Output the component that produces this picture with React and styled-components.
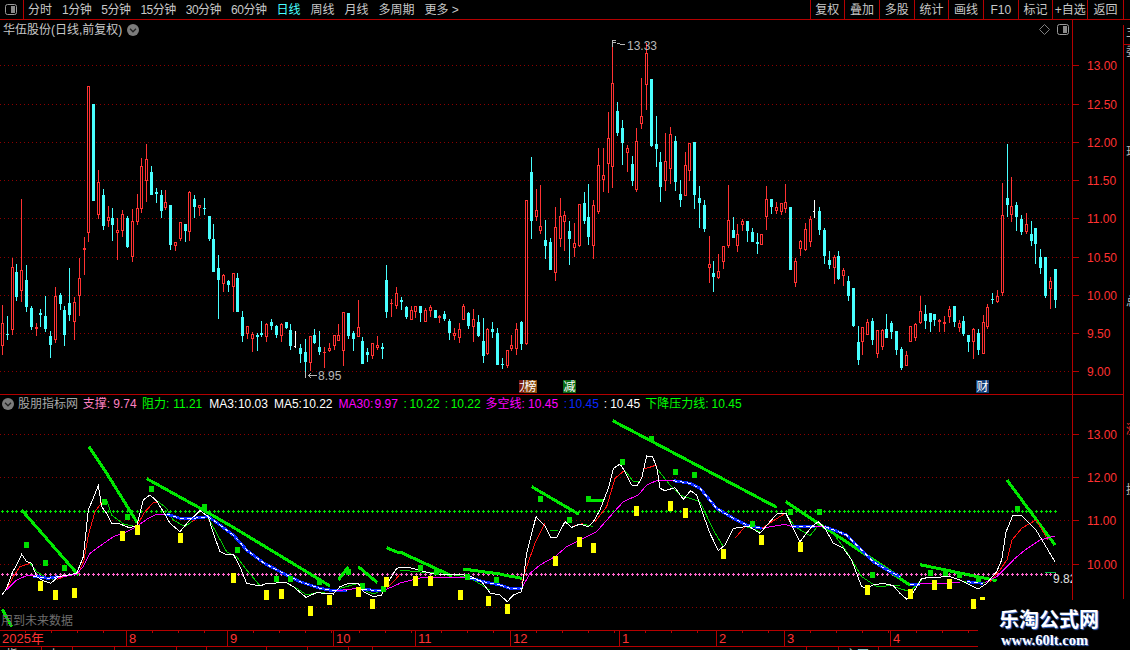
import React from 'react';
import styled, { createGlobalStyle } from 'styled-components';

const RED = '#ff3232';
const LINE = '#b40000';
const CYAN = '#48ffff';
const FONT = '"Liberation Sans", "Noto Sans CJK SC", sans-serif';

const GlobalStyle = createGlobalStyle`
  html, body { margin: 0; padding: 0; background: #000; }
  #root { width: 1130px; height: 650px; overflow: hidden; }
`;

/* ---------- candle data, read off the chart: [x, colour, high, top, bottom, low] ---------- */
const C1 = [[7,'r',675,730,800,825],[22,'c',708,762,765,780],[37,'r',534,562,750,765],[49,'c',552,576,651,663],[64,'r',357,571,635,666],[79,'c',556,600,681,696],[94,'c',679,684,741,750],[109,'r',729,741,747,768],[121,'c',687,699,705,741],[136,'c',648,708,748,756],[151,'c',753,768,795,834],[166,'r',621,648,780,789],[181,'c',640,645,672,690],[193,'c',678,690,765,798],[208,'c',564,669,705,723],[223,'r',651,667,728,780],[238,'r',534,595,650,708],[253,'r',471,504,510,585],[265,'r',18,18,461,486],[280,'c',72,72,363,363],[295,'r',270,306,407,417],[310,'c',327,345,438,450],[325,'r',378,411,423,441],[337,'c',384,414,435,483],[352,'r',416,451,461,540],[367,'r',390,403,453,471],[382,'c',408,414,501,504],[397,'r',387,424,533,546],[412,'r',342,385,426,435],[424,'r',234,259,387,399],[439,'r',192,238,303,366],[454,'c',258,276,345,345],[469,'c',324,336,342,369],[484,'c',330,345,393,414],[496,'r',330,366,384,390],[511,'c',375,375,495,510],[526,'r',487,487,498,513],[541,'r',427,427,477,483],[556,'c',432,432,453,486],[568,'r',333,336,456,483],[583,'c',345,357,381,414],[598,'r',376,376,384,408],[613,'c',354,384,387,405],[628,'c',408,408,477,483],[640,'c',432,477,576,576],[655,'c',525,564,600,717],[670,'r',582,585,612,636],[685,'c',600,603,615,636],[700,'r',579,579,621,696],[712,'c',579,594,696,696],[727,'c',693,711,768,786],[742,'r',738,738,762,777],[757,'r',756,762,777,816],[772,'c',759,766,771,813]];
const C2 = [[4,'c',723,759,765,771],[19,'r',729,732,771,786],[34,'c',717,726,738,750],[49,'c',735,738,765,774],[64,'r',729,732,768,786],[79,'c',726,726,744,747],[91,'c',732,750,798,810],[106,'w',753,798,801,804],[121,'c',792,804,822,849],[136,'c',777,816,846,885],[151,'r',768,768,849,873],[163,'c',747,765,789,792],[178,'c',753,801,816,825],[193,'r',801,816,819,864],[208,'r',789,804,813,816],[223,'r',765,766,798,810],[235,'r',732,765,783,783],[250,'r',696,696,813,858],[265,'c',699,699,768,777],[280,'c',753,759,777,813],[295,'r',660,741,771,771],[307,'c',771,783,852,852],[322,'c',804,816,825,846],[337,'r',789,789,828,837],[352,'r',768,795,804,810],[367,'c',789,801,807,837],[379,'c',555,600,696,714],[394,'r',657,669,672,711],[409,'r',621,639,678,687],[424,'c',651,660,666,690],[439,'c',678,681,711,717],[454,'r',678,690,720,720],[466,'r',678,678,696,714],[481,'c',678,678,699,726],[496,'r',684,690,726,726],[511,'r',675,681,693,711],[526,'c',690,690,714,714],[538,'r',705,708,714,729],[553,'c',693,702,717,723],[568,'c',717,723,759,780],[583,'r',744,759,768,780],[598,'r',729,747,774,789],[610,'r',672,678,720,720],[625,'c',696,699,738,747],[640,'r',687,717,741,786],[655,'c',705,726,768,771],[670,'c',714,783,828,849],[682,'r',744,747,822,825],[697,'c',726,747,756,774],[712,'c',744,759,855,855],[727,'c',834,852,855,867],[742,'r',810,810,858,864],[754,'r',765,795,807,813],[769,'r',729,747,807,825]];
const C3 = [[4,'c',873,876,942,960],[19,'r',510,510,942,945],[34,'c',381,426,573,627],[49,'r',477,540,561,573],[61,'r',465,588,603,612],[76,'c',570,630,648,687],[91,'c',624,636,720,720],[106,'r',531,591,729,753],[121,'r',504,558,627,651],[133,'r',543,555,576,663],[148,'c',573,603,627,705],[163,'r',579,639,654,681],[178,'r',522,522,648,651],[193,'c',486,519,573,582],[205,'c',462,561,621,645],[220,'r',510,525,648,687],[235,'r',354,405,546,552],[250,'r',354,435,450,486],[265,'r',246,324,402,489],[277,'r',39,159,411,474],[292,'c',216,243,309,318],[307,'c',270,294,339,405],[322,'r',345,354,369,426],[337,'c',378,402,453,468],[349,'r',294,333,480,486],[364,'r',144,258,282,297],[379,'r',39,69,167,240],[394,'c',147,147,348,351],[409,'c',258,342,357,411],[421,'c',366,396,471,516],[436,'r',309,393,453,483],[451,'r',291,312,417,462],[466,'c',318,333,456,483],[481,'c',450,492,510,531],[496,'r',366,405,498,498],[508,'r',339,339,423,453],[523,'c',336,336,495,537],[538,'c',468,504,519,594],[553,'c',510,525,597,606],[568,'r',618,702,714,759],[580,'c',693,729,741,786],[595,'r',672,723,745,747],[610,'r',648,648,696,717],[625,'r',465,570,648,654],[640,'c',561,600,624,624],[652,'r',582,612,648,666],[667,'r',567,573,585,603],[682,'c',573,573,603,636],[697,'c',594,606,636,636],[712,'c',609,636,642,672],[724,'r',612,612,645,645],[739,'r',468,507,561,600],[754,'c',507,507,531,552],[769,'r',516,531,543,552]];
const C4 = [[4,'r',219,219,246,255],[16,'r',162,216,237,249],[31,'c',231,231,420,420],[46,'r',384,393,459,471],[61,'r',330,333,357,378],[76,'r',279,297,360,363],[91,'r',258,267,336,351],[103,'w',210,243,246,264],[118,'c',231,243,300,315],[133,'c',294,300,378,402],[148,'c',363,390,405,417],[163,'r',375,381,414,462],[175,'c',363,378,447,450],[190,'r',414,420,438,468],[205,'c',438,453,498,513],[220,'c',474,474,588,591],[235,'c',588,636,690,705],[247,'r',591,591,636,675],[262,'r',567,576,615,615],[277,'c',564,573,630,645],[292,'r',600,600,672,684],[307,'r',597,600,651,660],[319,'c',552,597,624,624],[334,'c',573,579,606,627],[349,'c',603,603,660,675],[364,'c',651,657,714,720],[379,'r',663,675,708,708],[391,'r',588,588,636,636],[406,'r',579,582,624,633],[421,'r',498,543,579,582],[436,'c',525,552,573,597],[451,'c',549,549,576,606],[463,'c',552,552,570,588],[478,'r',567,570,576,606],[493,'r',558,576,582,606],[508,'r',528,537,561,579],[523,'c',528,528,576,591],[538,'r',570,579,594,606],[550,'c',558,573,612,618],[565,'c',615,615,636,666],[580,'r',594,597,636,687],[595,'c',597,609,660,675],[610,'r',555,576,672,672],[622,'r',522,531,591,597],[637,'c',489,507,510,522],[652,'r',480,498,516,519],[667,'r',159,255,489,498],[682,'c',42,204,225,261],[694,'r',141,228,255,276],[709,'c',216,225,261,303],[724,'c',255,267,306,315],[739,'r',249,282,306,312],[754,'c',273,312,333,348],[766,'c',294,294,342,402],[781,'c',357,381,414,432],[796,'c',381,381,498,504],[811,'r',441,453,477,537],[826,'c',417,417,510,534]];

const toCandles = (rows, ox, oy) =>
  rows.map(([x, k, hi, top, bot, lo]) => ({
    x: ox + Math.floor(x / 3),
    k,
    hi: oy + Math.floor(hi / 3),
    top: oy + Math.floor(top / 3),
    bot: oy + Math.floor(bot / 3),
    lo: oy + Math.floor(lo / 3),
  }));

const CANDLES = [
  ...toCandles(C1, 0, 80),
  ...toCandles(C2, 260, 80),
  ...toCandles(C3, 520, 30),
  ...toCandles(C4, 780, 130),
];

/* ---------- indicator data: zoomed coordinates per region ---------- */
const A = (pts) => pts.map(([x, y]) => [x / 3, 420 + y / 3]);
const B = (pts) => pts.map(([x, y]) => [500 + x / 3, 420 + y / 3]);
const D = (pts) => pts.map(([x, y]) => [800 + x / 3, 560 + y / 3]);

const WHITE = [
  ...A([[6,525],[20,505],[38,455],[50,435],[65,403],[80,425],[95,430],[110,470],[125,480],[152,490],[175,470],[205,465],[230,460],[250,410],[265,270],[295,197],[305,260],[320,280],[335,310],[360,312],[385,322],[410,320],[430,240],[450,225],[470,243],[490,275],[510,310],[540,335],[565,305],[600,272],[625,290],[640,340],[660,395],[680,405],[700,403],[720,440],[740,490],[780,498],[800,490],[860,488],[880,500],[918,532],[950,518],[1000,522],[1020,500],[1045,490],[1075,490],[1090,515],[1120,530],[1145,525],[1165,485],[1190,445],[1200,442]]),
  [408,567],[418,570],[430,573],[445,575],[458,574],[470,576],[482,582],[490,593],
  ...B([[0,525],[22,545],[40,525],[65,515],[80,400],[108,290],[135,318],[152,352],[170,352],[195,305],[215,322],[240,312],[265,320],[280,305],[300,270],[325,205],[340,145],[360,132],[375,155],[395,195],[410,198],[425,175],[440,108],[458,110],[472,150],[480,205],[495,212],[525,203],[550,238],[572,212],[590,225],[610,285],[630,340],[655,392],[675,375],[700,325],[725,322],[745,318],[780,340],[810,305],[830,282],[858,280],[875,315],[900,365],[935,320],[955,305],[975,325],[1000,370],[1030,385],[1055,420],[1085,500],[1100,505],[1120,495],[1150,490],[1180,497],[1200,520]]),
  ...D([[320,117],[335,105],[365,55],[400,52],[450,50],[480,60],[510,75],[535,87],[560,70],[590,35],[605,0]]),
  [1006,532],[1013,515],[1022,516],[1036,530],[1048,550],[1055,562],
];

const RED_SEGS = [
  A([[20,507],[40,470],[60,440],[90,430]]),
  A([[170,478],[190,472]]),
  A([[235,462],[252,420],[265,345],[285,275],[305,248],[320,240]]),
  A([[410,318],[435,275],[460,248],[475,245]]),
  A([[575,305],[600,290]]),
  A([[1160,505],[1185,480],[1200,462]]),
  B([[65,490],[80,440],[105,370],[135,308]]),
  B([[215,320],[250,310]]),
  B([[285,305],[320,260],[345,175],[375,150]]),
  B([[430,148],[470,135]]),
  B([[705,355],[735,320]]),
  B([[785,325],[855,280]]),
  D([[570,65],[600,30],[620,0]]),
  [[1007,560],[1012,540],[1022,528],[1036,520],[1048,540]],
];

const GREEN_SEGS = [
  A([[90,430],[110,455],[135,470],[160,478]]),
  A([[320,240],[335,285],[370,312],[410,320]]),
  A([[475,245],[500,265],[520,300],[555,320],[575,305]]),
  A([[625,295],[650,340],[680,395],[710,410],[740,450],[780,497]]),
  A([[860,490],[890,505],[920,525],[950,518],[1000,520]]),
  A([[1020,505],[1075,490],[1090,510],[1120,522],[1150,510]]),
  [[400,570],[420,572],[445,573],[470,578],[490,590]],
  B([[150,330],[175,332]]),
  B([[250,312],[280,320]]),
  B([[375,152],[400,185],[420,185]]),
  B([[470,145],[510,195],[540,225],[600,245],[640,330],[670,380]]),
  B([[740,320],[780,335]]),
  B([[858,282],[885,320],[930,347],[960,310]]),
  B([[1000,340],[1040,395],[1085,470],[1130,500],[1200,495]]),
  D([[280,80],[330,95],[365,60]]),
  D([[470,58],[510,70],[555,68]]),
];

const BLUE_SEGS = [
  A([[100,468],[145,475],[175,470]]),
  A([[500,282],[540,295],[580,295],[625,290],[660,315],[700,345],[740,390],[790,428],[850,460],[900,485],[960,505],[1000,512],[1040,512]]),
  A([[1090,508],[1150,513]]),
  [[470,578],[485,582],[500,585]],
  B([[0,495],[30,505],[65,505]]),
  B([[520,182],[570,190],[600,205],[650,265],[700,295],[740,315],[785,325]]),
  B([[875,320],[945,320]]),
  B([[975,320],[1040,345],[1075,380],[1120,425],[1170,455],[1200,470]]),
  D([[330,72],[360,72]]),
  D([[500,65],[550,70]]),
];

const PURPLE_SEGS = [
  A([[20,510],[50,480],[80,467],[105,467]]),
  A([[175,472],[190,470],[230,462],[250,440],[270,400],[300,378],[340,350],[380,335],[410,320],[440,298],[470,283],[500,282]]),
  A([[1010,512],[1075,505],[1090,508]]),
  A([[1150,512],[1200,490]]),
  [[400,583],[420,578],[440,577],[470,578]],
  B([[65,505],[90,460],[120,435],[165,410],[200,380],[240,360],[290,335],[325,295],[370,245],[415,225],[440,195],[470,182],[520,182]]),
  B([[785,325],[855,313],[875,320]]),
  B([[945,320],[975,320]]),
  D([[360,72],[480,68]]),
  D([[555,68],[590,50],[640,0]]),
  [[1013,560],[1025,550],[1040,540],[1055,536]],
];

const TRENDS = [
  A([[65,270],[235,465]]),
  A([[267,80],[320,160],[412,308]]),
  A([[440,176],[610,270],[700,322],[990,498]]),
  A([[1015,480],[1045,440]]),
  A([[1075,440],[1132,488]]),
  A([[1160,383],[1200,400]]),
  A([[7,568],[35,620]]),
  [[400,552],[452,576]],
  [[463,569],[500,574]],
  B([[0,463],[66,475]]),
  B([[95,200],[237,283]]),
  B([[265,242],[310,242]]),
  B([[338,2],[830,262]]),
  B([[857,245],[1200,472]]),
  D([[215,0],[330,75]]),
  D([[360,14],[590,62]]),
  [[1007,480],[1055,545]],
];

const GREEN_BOXES = [
  ...A([[79,375],[136,429],[193,444],[311,245],[382,291],[454,207],[613,261],[712,390],[829,477],[871,476],[958,487],[1045,456],[1087,497],[1148,507]]),
  ...B([[121,237],[208,300],[265,237],[367,127],[454,58],[526,156],[583,165],[757,312],[871,276],[958,276],[1117,465]]),
  ...D([[391,38],[434,40],[478,45],[535,58]]),
  [420,568],[436,572],[467,577],[496,580],[1017,509],
];

const YELLOW_BOXES = [
  ...A([[121,499],[166,526],[223,520],[367,348],[412,330],[541,355],[700,474],[799,526],[844,523],[931,574],[988,541],[1075,516],[1117,553],[1159,485]]),
  ...B([[22,568],[166,423],[238,366],[280,384],[409,274],[511,259],[556,279],[670,402],[784,360],[901,381],[1102,511]]),
  ...D([[331,103],[403,76],[448,73],[520,133]]),
  [415,581],[430,581],[460,595],[488,601],
];

const UPPER_GRID = [65, 104, 142, 180, 218, 257, 295, 333, 371];
const LOWER_GRID = [434, 477, 520, 564, 607];

const plusPath = (y, to) => {
  let d = '';
  for (let i = 0; 2.4 + 4.81 * i < to; i++) {
    const x = Math.floor(2.4 + 4.81 * i);
    d += `M${x - 1} ${y + 0.5}h3M${x + 0.5} ${y - 1}v3`;
  }
  return d;
};

/* ---------- page layout ---------- */
const Page = styled.div`
  width: 1130px;
  height: 650px;
  background: #000;
  color: #c8c8c8;
  font: 12px/1 ${FONT};
  display: flex;
  flex-direction: column;
  overflow: hidden;
  position: relative;
`;

const Toolbar = styled.header`
  flex: none;
  height: 19px;
  display: flex;
  align-items: stretch;
  border-bottom: 1px solid ${LINE};
`;

const ToggleCell = styled.div`
  width: 23px;
  border-right: 1px solid ${LINE};
  display: flex;
  align-items: center;
  justify-content: center;
`;

const PeriodNav = styled.nav`
  display: flex;
  align-items: center;
  gap: 10px;
  padding-left: 4px;
`;

const Period = styled.span`
  white-space: nowrap;
  letter-spacing: ${(p) => (p.$tight ? '-0.5px' : '0')};
  color: ${(p) => (p.$active ? CYAN : '#c8c8c8')};
`;

const ToolGroup = styled.div`
  margin-left: auto;
  display: flex;
  padding-right: 6px;
`;

const ToolButton = styled.button`
  all: unset;
  box-sizing: border-box;
  width: 34.7px;
  display: flex;
  align-items: center;
  justify-content: center;
  white-space: nowrap;
  border-left: 1px solid ${LINE};
  font: 12px/1 ${FONT};
  color: #c8c8c8;
  &:last-child { border-right: 1px solid ${LINE}; width: 37px; }
`;

const Workspace = styled.div`
  flex: 1;
  display: flex;
  min-height: 0;
`;

const Panes = styled.div`
  width: 1123px;
  flex: none;
  display: flex;
  flex-direction: column;
`;

const Pane = styled.section`
  height: ${(p) => p.$height}px;
  flex: none;
  display: flex;
  position: relative;
  box-sizing: border-box;
  border-top: ${(p) => (p.$ruled ? `1px solid ${LINE}` : '0')};
`;

const Plot = styled.div`
  width: 1072px;
  flex: none;
  position: relative;
  overflow: hidden;
`;

const ChartSvg = styled.svg`
  display: block;
  width: 1072px;
  height: 100%;
`;

const PriceAxis = styled.div`
  flex: 1;
  position: relative;
  border-left: 1px solid ${LINE};
`;

const PriceTick = styled.span`
  position: absolute;
  left: 14px;
  color: ${RED};
  line-height: 14px;
  &::before {
    content: '';
    position: absolute;
    left: -14px;
    top: 6px;
    width: 6px;
    height: 1px;
    background: ${LINE};
  }
`;

const PaneHeader = styled.div`
  position: absolute;
  left: 3px;
  top: 3px;
  display: flex;
  align-items: center;
  gap: 5px;
  height: 13px;
`;

const PaneTools = styled.div`
  position: absolute;
  right: 2px;
  top: 3px;
  display: flex;
  align-items: center;
  gap: 7px;
  height: 13px;
`;

const Legend = styled.div`
  position: absolute;
  left: 2px;
  top: 1px;
  height: 16px;
  display: flex;
  align-items: center;
  white-space: nowrap;
`;

const LegendTitle = styled.span`
  color: #a8a8a8;
  margin-left: 4px;
  margin-right: 4.7px;
`;

const LegendItem = styled.span`
  color: ${(p) => p.$color};
  margin-right: ${(p) => p.$gap ?? 7}px;
`;

const Warning = styled.span`
  position: absolute;
  left: 1px;
  bottom: 3px;
  color: #6e6e6e;
`;

const Marker = styled.span`
  position: absolute;
  top: 360px;
  height: 13px;
  width: ${(p) => p.$width || 13}px;
  overflow: hidden;
  display: flex;
  align-items: center;
  justify-content: ${(p) => (p.$width ? 'flex-start' : 'center')};
  background: ${(p) => p.$bg};
  color: #fff;
  font-size: 12px;
`;

const TimeAxis = styled.div`
  flex: none;
  height: 17px;
  box-sizing: border-box;
  display: flex;
  border-top: 1px solid ${LINE};
  border-bottom: 1px solid ${LINE};
`;

const Month = styled.div`
  flex: none;
  width: ${(p) => p.$width}px;
  box-sizing: border-box;
  padding: 1px 0 0 2px;
  color: ${RED};
  font-size: 13px;
  border-left: ${(p) => (p.$first ? '0' : `1px solid ${LINE}`)};
  background: repeating-linear-gradient(
      to right,
      transparent 0 25px,
      ${LINE} 25px 26px
    ) top left / 100% 2px no-repeat;
`;

const TabBar = styled.div`
  flex: none;
  height: 4px;
  display: flex;
  overflow: hidden;
`;

const Tab = styled.div`
  flex: none;
  width: ${(p) => p.$width}px;
  box-sizing: border-box;
  border-right: 1px solid ${LINE};
  padding: 2px 0 0 6px;
  white-space: nowrap;
  overflow: hidden;
  color: ${(p) => (p.$active ? '#9fdede' : '#c8c8c8')};
`;

const SideStrip = styled.aside`
  flex: none;
  width: 7px;
  height: 574px;
  margin-top: 5px;
  box-sizing: border-box;
  border-left: 1px solid ${LINE};
  overflow: hidden;
  display: flex;
  flex-direction: column;
`;

const SideCell = styled.div`
  flex: none;
  height: ${(p) => p.$height}px;
  padding-left: 2px;
  color: ${(p) => p.$color || '#b8b8b8'};
  border-bottom: ${(p) => (p.$ruled ? `1px solid ${LINE}` : '0')};
  white-space: nowrap;
  line-height: 14px;
`;

const Watermark = styled.div`
  position: absolute;
  right: 0;
  bottom: 0;
  width: 152px;
  height: 50px;
  background: #000;
  display: flex;
  flex-direction: column;
  align-items: flex-start;
  padding: 8px 0 0 21px;
  box-sizing: border-box;
  gap: 3px;
`;

const WatermarkTitle = styled.div`
  color: #fff;
  font: 700 20px/22px "Noto Sans CJK SC", serif;
  text-shadow: 1px 1px 1px #3f6fd0;
`;

const WatermarkUrl = styled.div`
  color: #fff;
  margin-left: 2px;
  font: 700 14.5px/15px "Liberation Serif", serif;
  text-shadow: 1px 1px 1px #3f6fd0;
`;

/* ---------- drawn parts ---------- */
const PanelIcon = () => (
  <svg width="13" height="12" viewBox="0 0 13 12">
    <rect x="0.5" y="0.5" width="11" height="10" rx="2" fill="none" stroke="#9a9a9a" />
    <rect x="6" y="2" width="4" height="7" fill="#8a8a8a" />
  </svg>
);

const ChevronBadge = () => (
  <svg width="12" height="12" viewBox="0 0 12 12">
    <circle cx="6" cy="6" r="6" fill="#7c7c7c" />
    <path d="M3 4.8 6 7.8 9 4.8" fill="none" stroke="#222" strokeWidth="1.3" />
  </svg>
);

const DiamondIcon = () => (
  <svg width="11" height="11" viewBox="0 0 11 11">
    <path d="M5.5 .5 10.5 5.5 5.5 10.5 .5 5.5Z" fill="none" stroke="#808080" />
  </svg>
);

const Candle = ({ c }) => {
  const col = c.k === 'r' ? RED : c.k === 'c' ? CYAN : '#fff';
  const h = Math.max(1, c.bot - c.top);
  return (
    <g>
      <rect x={c.x} y={c.hi} width="1" height={Math.max(1, c.lo - c.hi)} fill={col} />
      {c.k === 'w' ? (
        <rect x={c.x - 1} y={c.top} width="2" height="1" fill={col} />
      ) : (
        <rect x={c.x - 1} y={c.top} width="3" height={h} fill={col} />
      )}
      {c.k === 'r' && h >= 3 && (
        <rect x={c.x} y={c.top + 1} width="1" height={h - 2} fill="#000" />
      )}
    </g>
  );
};

const Grid = ({ ys }) =>
  ys.map((y) => (
    <line key={y} x1="0" x2="1072" y1={y + 0.5} y2={y + 0.5} stroke="#8c0000" strokeDasharray="1 3" />
  ));

const Lines = ({ segs, color, width = 1, dash }) =>
  segs.map((s, i) => (
    <polyline key={i} points={s.map((p) => p.join(',')).join(' ')} fill="none" stroke={color} strokeWidth={width} strokeDasharray={dash} />
  ));

const PERIODS = ['分时', '1分钟', '5分钟', '15分钟', '30分钟', '60分钟', '日线', '周线', '月线', '多周期'];
const TOOLS = ['复权', '叠加', '多股', '统计', '画线', 'F10', '标记', '+自选', '返回'];
const UPPER_TICKS = [['13.00', 65], ['12.50', 104], ['12.00', 142], ['11.50', 180], ['11.00', 218], ['10.50', 257], ['10.00', 295], ['9.50', 333], ['9.00', 371]];
const LOWER_TICKS = [['13.00', 434], ['12.00', 477], ['11.00', 520], ['10.00', 564]];
const MONTHS = [['2025年', 126], ['8', 101], ['9', 106], ['10', 82], ['11', 95], ['12', 109], ['1', 97], ['2', 68], ['3', 106], ['4', 233]];
const LEGEND = [
  ['支撑:', '#ff80c0', 3.3], ['9.74', '#ff80c0', 5.4],
  ['阻力:', '#00ff00', 3.7], ['11.21', '#00ff00', 7],
  ['MA3:', '#fff', 0.6], ['10.03', '#fff', 6],
  ['MA5:', '#fff', 0.6], ['10.22', '#fff', 6],
  ['MA30:', '#ff00ff', 1.3], ['9.97', '#ff00ff', 5.7],
  [':', '#00ff00', 2.7], ['10.22', '#00ff00', 5],
  [':', '#00ff00', 2.7], ['10.22', '#00ff00', 4.7],
  ['多空线:', '#ff00ff', 3.3], ['10.45', '#ff00ff', 5.7],
  [':', '#0a28ff', 1.7], ['10.45', '#0a28ff', 5],
  [':', '#fff', 3], ['10.45', '#fff', 5],
  ['下降压力线:', '#00ff00', 3], ['10.45', '#00ff00', 0],
];
const TABS = [[42, '指'], [31, '上'], [42, ''], [62, ''], [30, ''], [60, ''], [41, ''], [41, ''], [24, ''], [434, ''], [32, ''], [40, '主图', true]];

export default function App() {
  return (
    <Page>
      <GlobalStyle />
      <Toolbar>
        <ToggleCell><PanelIcon /></ToggleCell>
        <PeriodNav>
          {PERIODS.map((p) => (
            <Period key={p} $active={p === '日线'} $tight={/\d/.test(p)}>{p}</Period>
          ))}
          <Period>更多 &gt;</Period>
        </PeriodNav>
        <ToolGroup>
          {TOOLS.map((t) => <ToolButton key={t}>{t}</ToolButton>)}
        </ToolGroup>
      </Toolbar>

      <Workspace>
        <Panes>
          <Pane $height={374}>
            <Plot>
              <ChartSvg viewBox="0 20 1072 374" shapeRendering="crispEdges">
                <Grid ys={UPPER_GRID} />
                {CANDLES.map((c, i) => <Candle key={i} c={c} />)}
                <path d="M612.5 47V40.5H616M612 42.5H616M617 43.5h2l2 1h4" fill="none" stroke="#b8b8b8" />
                <text x="627" y="50" fill="#b8b8b8" fontSize="12" fontFamily="Liberation Sans">13.33</text>
                <path d="M305.5 372V378M308 375.5H317M308 375.5l3-2M308 375.5l3 2" fill="none" stroke="#b8b8b8" />
                <text x="318" y="380" fill="#b8b8b8" fontSize="12" fontFamily="Liberation Sans">8.95</text>
              </ChartSvg>
              <PaneHeader>
                <span>华伍股份(日线,前复权)</span>
                <ChevronBadge />
              </PaneHeader>
              <PaneTools>
                <DiamondIcon />
                <PanelIcon />
              </PaneTools>
              <Marker $bg="#7a1a10" $width={5} style={{ left: 519 }}>龙</Marker>
              <Marker $bg="#8a4a10" style={{ left: 524 }}>榜</Marker>
              <Marker $bg="#0a6a14" style={{ left: 563 }}>减</Marker>
              <Marker $bg="#14407a" style={{ left: 976 }}>财</Marker>
            </Plot>
            <PriceAxis>
              {UPPER_TICKS.map(([t, y]) => (
                <PriceTick key={t} style={{ top: y - 20 - 6 }}>{t}</PriceTick>
              ))}
            </PriceAxis>
          </Pane>

          <Pane $height={236} $ruled>
            <Plot>
              <ChartSvg viewBox="0 395 1072 235" shapeRendering="crispEdges">
                <Grid ys={LOWER_GRID} />
                <path d={plusPath(511, 1056)} stroke="#00e000" fill="none" />
                <path d={plusPath(574, 1056)} stroke="#ff66cc" fill="none" />
                <Lines segs={TRENDS} color="#00e800" width={3} />
                <Lines segs={GREEN_SEGS} color="#00d000" />
                <Lines segs={RED_SEGS} color="#ff1010" />
                <Lines segs={BLUE_SEGS} color="#0a28ff" width={3} />
                <Lines segs={BLUE_SEGS} color="#ffffff" dash="4 3" />
                <Lines segs={PURPLE_SEGS} color="#ff00ff" />
                <Lines segs={[WHITE]} color="#fff" />
                {GREEN_BOXES.map(([x, y], i) => (
                  <rect key={i} x={Math.round(x) - 2} y={Math.round(y) - 3} width="5" height="6" fill="#00e000" />
                ))}
                {YELLOW_BOXES.map(([x, y], i) => (
                  <rect key={i} x={Math.round(x) - 2} y={Math.round(y) - 5} width="5" height="10" fill="#ffff00" />
                ))}
                <rect x="980" y="597" width="5" height="3" fill="#ffff00" />
                <line x1="1045" x2="1056" y1="572" y2="572" stroke="#00c040" />
                <text x="1053" y="583" fill="#e0e0e0" fontSize="12" fontFamily="Liberation Sans">9.82</text>
              </ChartSvg>
              <Legend>
                <ChevronBadge />
                <LegendTitle>股朋指标网</LegendTitle>
                {LEGEND.map(([t, color, gap], i) => (
                  <LegendItem key={i} $color={color} $gap={gap}>{t}</LegendItem>
                ))}
              </Legend>
              <Warning>用到未来数据</Warning>
            </Plot>
            <PriceAxis>
              {LOWER_TICKS.map(([t, y]) => (
                <PriceTick key={t} style={{ top: y - 395 - 6 }}>{t}</PriceTick>
              ))}
            </PriceAxis>
          </Pane>

          <TimeAxis>
            {MONTHS.map(([m, w], i) => (
              <Month key={m} $width={w} $first={i === 0}>{m}</Month>
            ))}
          </TimeAxis>
          <TabBar>
            {TABS.map(([w, t, a], i) => (
              <Tab key={i} $width={w} $active={a}>{t}</Tab>
            ))}
          </TabBar>
        </Panes>

        <SideStrip>
          <SideCell $height={19} $ruled>主力</SideCell>
          <SideCell $height={100}>委比</SideCell>
          <SideCell $height={150}>现价</SideCell>
          <SideCell $height={128}>总量</SideCell>
          <SideCell $height={60} $color={RED}>涨幅</SideCell>
          <SideCell $height={100}>换手</SideCell>
        </SideStrip>
      </Workspace>

      <Watermark>
        <WatermarkTitle>乐淘公式网</WatermarkTitle>
        <WatermarkUrl>www.60lt.com</WatermarkUrl>
      </Watermark>
    </Page>
  );
}
